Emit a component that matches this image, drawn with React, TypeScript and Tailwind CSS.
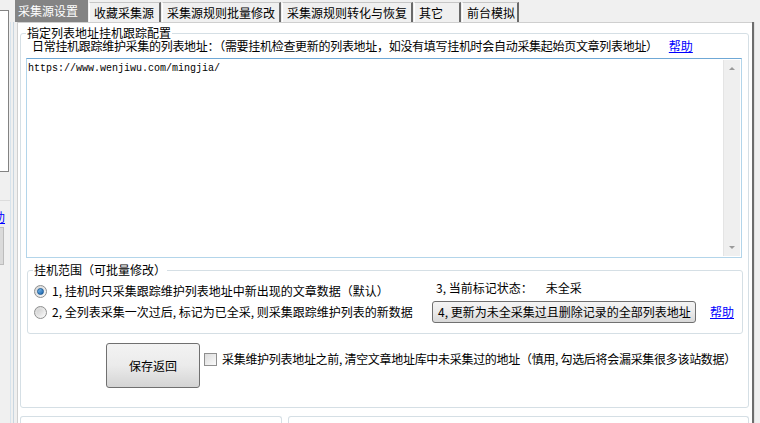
import React from 'react';

const tabs = [
  { label: '收藏采集源', className: 'w-[72px]' },
  { label: '采集源规则批量修改', className: 'w-[119px]' },
  { label: '采集源规则转化与恢复', className: 'w-[131px]' },
  { label: '其它', className: 'w-[47px]' },
  { label: '前台模拟', className: 'w-[57px]' },
];

const Radio: React.FC<{ checked?: boolean }> = ({ checked }) => (
  <div className="flex h-[13px] w-[13px] shrink-0 items-center justify-center rounded-full border border-[#8e8f8f] bg-gradient-to-br from-[#d4d4d4] to-[#fbfbfb]">
    {checked ? (
      <div className="h-[7px] w-[7px] rounded-full border border-[#1b5a95] bg-gradient-to-br from-[#7cc0f2] to-[#1560a8]" />
    ) : (
      <div className="h-[7px] w-[7px] rounded-full bg-gradient-to-br from-[#cfcfcf] to-[#f4f4f4]" />
    )}
  </div>
);

const HelpLink: React.FC<{ className?: string }> = ({ className }) => (
  <span className={`text-[#0000ff] underline ${className ?? ''}`}>帮助</span>
);

const App: React.FC = () => {
  return (
    <div className="flex h-[423px] w-[760px] overflow-hidden bg-[#f0f0f0] font-['Noto_Sans_CJK_SC',sans-serif] text-[12px] leading-[14px] text-black">
      {/* piece of the window behind */}
      <div className="flex w-[15px] shrink-0 overflow-hidden">
        <div className="flex w-[10px] flex-col">
          <div className="mt-[10px] h-[162px] w-[9px] border-y border-r border-[#838383] bg-white" />
          <div className="mt-[28px] w-[10px] border-t border-[#dcdcdc]" />
          <div className="-ml-[7px] mt-[9px] text-[#0000ff] underline">助</div>
          <div className="mt-[3px] h-[38px] w-[4px] border-y border-r border-[#bcbcbc] bg-[#dadada]" />
        </div>
        <div className="mt-[22px] w-[1px] bg-[#d7e3ec]" />
        <div className="mt-[22px] ml-[2px] w-[1px] bg-[#c9d6e0]" />
      </div>

      <div className="flex w-[737px] shrink-0 flex-col">
        {/* tabs */}
        <div className="flex h-[22px] items-end gap-[1px]">
          <div className="h-[22px] w-[73px] bg-[#848484] pl-[3px] leading-[22px] text-white">采集源设置</div>
          {tabs.map((tab) => (
            <div
              key={tab.label}
              className={`h-[20px] border-l border-r-2 border-t border-l-white border-r-[#6a6a6a] border-t-[#c6c6c6] bg-[#f0f0f0] pl-[4px] leading-[19px] ${tab.className}`}
            >
              {tab.label}
            </div>
          ))}
        </div>

        {/* tab page */}
        <div className="ml-[2px] flex flex-1 flex-col border-l border-t border-[#cfcfcf] bg-white pl-[2px]">
          <div className="relative mt-[10px] h-[375px] w-[729px] rounded-[3px] border border-[#d5dfe5]">
            <span className="absolute left-[5px] top-[-7px] bg-white px-[1px] leading-[12px]">指定列表地址挂机跟踪配置</span>

            <div className="mt-[6px] flex h-[12px] pl-[11px] leading-[12px]">
              <span className="tracking-[-0.3px]">日常挂机跟踪维护采集的列表地址：（需要挂机检查更新的列表地址，如没有填写挂机时会自动采集起始页文章列表地址）</span>
              <HelpLink className="ml-[11px]" />
            </div>

            {/* list of addresses */}
            <div className="ml-[5px] mt-[6px] flex h-[200px] w-[716px] border border-[#b3d5ea] border-t-[#6fa8d6]">
              <div className="flex-1 pl-[1px] pt-[3px] font-['Liberation_Mono',monospace] text-[10px] leading-[14px]">
                https://www.wenjiwu.com/mingjia/
              </div>
              <div className="my-[1px] mr-[1px] flex w-[17px] flex-col items-center justify-between border-l border-[#e4e4e4] bg-[#efefef] py-[7px]">
                <div className="h-0 w-0 border-x-[3px] border-b-[3px] border-x-transparent border-b-[#9a9a9a]" />
                <div className="h-0 w-0 border-x-[3px] border-t-[3px] border-x-transparent border-t-[#9a9a9a]" />
              </div>
            </div>

            {/* range */}
            <div className="relative ml-[6px] mt-[12px] h-[64px] w-[716px] rounded-[3px] border border-[#d5dfe5]">
              <span className="absolute left-[5px] top-[-7px] bg-white px-[1px] leading-[12px]">挂机范围（可批量修改）</span>
              <div className="mt-[10px] grid grid-cols-[398px_1fr] grid-rows-[20px_22px]">
                <div className="flex items-center gap-[5px] pl-[6px]">
                  <Radio checked />
                  <span>1, 挂机时只采集跟踪维护列表地址中新出现的文章数据（默认）</span>
                </div>
                <div className="flex items-start pl-[10px]">
                  <span>3, 当前标记状态：</span>
                  <span className="ml-[13px]">未全采</span>
                </div>
                <div className="flex items-center gap-[5px] pl-[6px]">
                  <Radio />
                  <span>2, 全列表采集一次过后, 标记为已全采, 则采集跟踪维护列表的新数据</span>
                </div>
                <div className="flex items-center pl-[6px]">
                  <div className="flex h-[22px] w-[264px] items-center rounded-[3px] border border-[#707070] bg-gradient-to-b from-[#f4f4f4] via-[#ebebeb] to-[#d8d8d8] pl-[5px]">
                    4, 更新为未全采集过且删除记录的全部列表地址
                  </div>
                  <HelpLink className="ml-[14px]" />
                </div>
              </div>
            </div>

            {/* save */}
            <div className="ml-[85px] mt-[9px] flex items-start">
              <div className="flex h-[45px] w-[94px] items-center justify-center rounded-[3px] border border-[#707070] bg-gradient-to-b from-[#f3f3f3] via-[#ebebeb] to-[#d4d4d4]">
                保存返回
              </div>
              <div className="ml-[4px] mt-[9px] flex h-[14px] items-center">
                <div className="h-[13px] w-[13px] border border-[#8f8f8f] bg-gradient-to-br from-[#dcdcdc] to-[#fafafa]" />
                <span className="ml-[5px] tracking-[-0.3px]">采集维护列表地址之前, 清空文章地址库中未采集过的地址（慎用, 勾选后将会漏采集很多该站数据）</span>
              </div>
            </div>
          </div>

          <div className="mt-[8px] flex gap-[6px]">
            <div className="h-[20px] w-[262px] rounded-t-[3px] border-x border-t border-[#d5dfe5]" />
            <div className="h-[20px] w-[461px] rounded-t-[3px] border-x border-t border-[#d5dfe5]" />
          </div>
        </div>
      </div>

      {/* right edge */}
      <div className="flex w-[8px] shrink-0 pt-[22px]">
        <div className="w-[2px] bg-[#6d6d6d]" />
        <div className="w-[1px] bg-[#e0e0e0]" />
      </div>
    </div>
  );
};

export default App;
